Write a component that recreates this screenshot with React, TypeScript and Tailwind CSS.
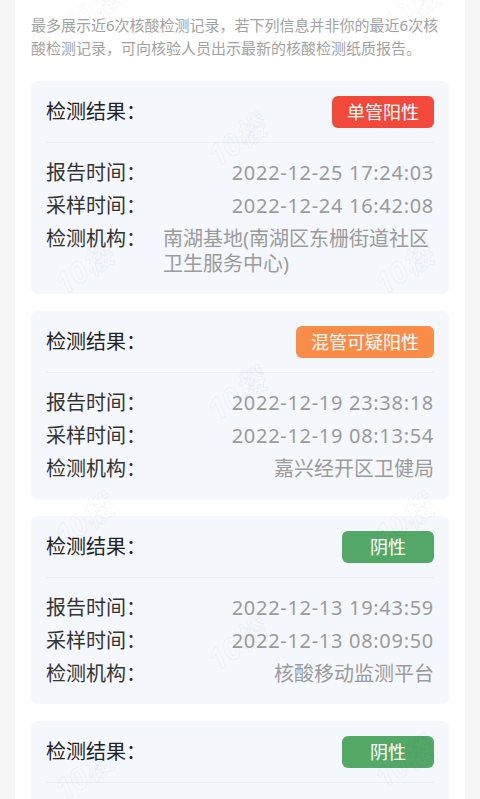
import React from 'react';

type Tone = 'red' | 'orange' | 'green';

interface TestRecord {
  result: string;
  tone: Tone;
  reportTime: string;
  sampleTime: string;
  org: string;
}

const records: TestRecord[] = [
  {
    result: '单管阳性',
    tone: 'red',
    reportTime: '2022-12-25 17:24:03',
    sampleTime: '2022-12-24 16:42:08',
    org: '南湖基地(南湖区东栅街道社区卫生服务中心)',
  },
  {
    result: '混管可疑阳性',
    tone: 'orange',
    reportTime: '2022-12-19 23:38:18',
    sampleTime: '2022-12-19 08:13:54',
    org: '嘉兴经开区卫健局',
  },
  {
    result: '阴性',
    tone: 'green',
    reportTime: '2022-12-13 19:43:59',
    sampleTime: '2022-12-13 08:09:50',
    org: '核酸移动监测平台',
  },
  {
    result: '阴性',
    tone: 'green',
    reportTime: '2022-12-08 20:11:37',
    sampleTime: '2022-12-08 09:25:16',
    org: '核酸移动监测平台',
  },
];

const badgeTone: Record<Tone, string> = {
  red: 'bg-[#f2493b]',
  orange: 'bg-[#fa8c48]',
  green: 'bg-[#54a867]',
};

// faint "10楼" watermark spots
const marks = [
  { x: 60, y: -12 },
  { x: 378, y: -12 },
  { x: 205, y: 118 },
  { x: 52, y: 246 },
  { x: 372, y: 246 },
  { x: 205, y: 372 },
  { x: 52, y: 498 },
  { x: 372, y: 498 },
  { x: 205, y: 622 },
  { x: 52, y: 752 },
  { x: 372, y: 740 },
];

const Row = ({ label, value, time }: { label: string; value: string; time?: boolean }) => (
  <div className="flex justify-between leading-[25px]">
    <span className="w-[117px] shrink-0 text-[#333333]">{label}</span>
    <span className={`text-left text-[#9b9b9b] ${time ? 'tracking-[0.7px]' : ''}`}>{value}</span>
  </div>
);

const RecordCard = ({ record }: { record: TestRecord }) => (
  <div className="rounded-[6px] bg-[#f4f7fc] px-[15px] pt-[15px] pb-[18px]">
    <div className="flex h-[32px] items-center justify-between">
      <span className="text-[#222222]">检测结果：</span>
      <span
        className={`flex h-[32px] min-w-[92px] items-center justify-center rounded-[6px] px-[15px] text-[18px] text-white ${badgeTone[record.tone]}`}
      >
        {record.result}
      </span>
    </div>
    <div className="mt-[14px] border-t border-[#e8ecf3]" />
    <div className="flex flex-col gap-[8px] pt-[17px]">
      <Row label="报告时间：" value={record.reportTime} time />
      <Row label="采样时间：" value={record.sampleTime} time />
      <Row label="检测机构：" value={record.org} />
    </div>
  </div>
);

export default function App() {
  return (
    <div
      className="h-[799px] overflow-hidden bg-[#f5f5f5] px-[15px] text-[20px]"
      style={{ fontFamily: '"Noto Sans", "Noto Sans CJK SC", sans-serif' }}
    >
      <div className="relative min-h-full bg-white px-4 pt-[14px]">
        <p className="mb-[21px] text-[15px] leading-[23px] text-[#a2a2a2]">
          最多展示近6次核酸检测记录，若下列信息并非你的最近6次核酸检测记录，可向核验人员出示最新的核酸检测纸质报告。
        </p>
        <div className="flex flex-col gap-[17px]">
          {records.map((r, i) => (
            <RecordCard key={i} record={r} />
          ))}
        </div>
        <div className="pointer-events-none absolute inset-0 overflow-hidden" aria-hidden="true">
          {marks.map((m, i) => (
            <span
              key={i}
              className="absolute -rotate-[35deg] text-[30px] font-bold italic text-black/[0.02] [-webkit-text-stroke:1px_rgba(0,0,0,0.05)]"
              style={{ left: m.x - 15, top: m.y }}
            >
              10楼
            </span>
          ))}
        </div>
      </div>
    </div>
  );
}
